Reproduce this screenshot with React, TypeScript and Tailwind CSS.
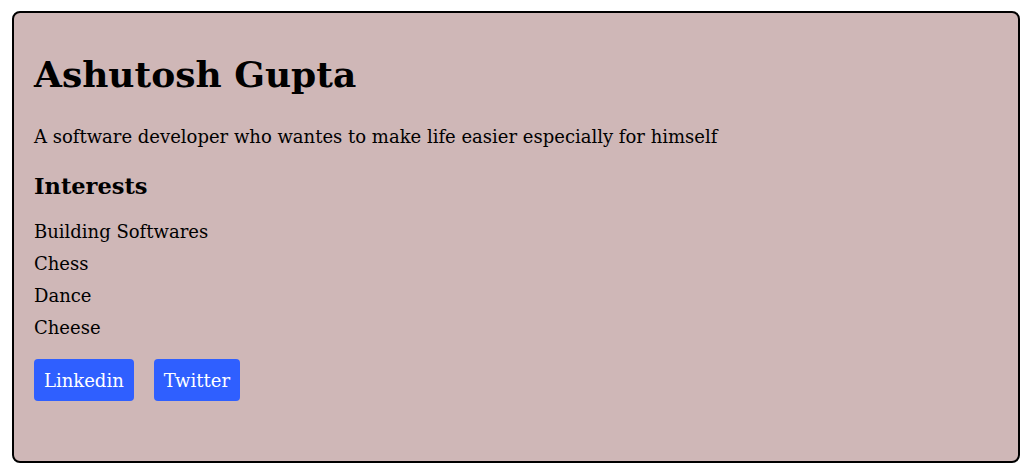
export default function App() {
  const interests = ["Building Softwares", "Chess", "Dance", "Cheese"];
  return (
    <div className="bg-white pt-[11px] pl-3 pr-[11px] pb-[13px]" style={{ fontFamily: '"DejaVu Serif", serif' }}>
      <div className="h-[452px] rounded-lg border-2 border-black bg-[#cfb7b7] px-5 pt-5 text-black">
        <h1 className="mt-5 text-[36px] font-bold leading-[42px]">Ashutosh Gupta</h1>
        <p className="mt-[31px] text-[18px] leading-[21px]">
          A software developer who wantes to make life easier especially for himself
        </p>
        <h2 className="mt-[26px] text-[22.5px] font-bold leading-[26px]">Interests</h2>
        <ul className="mt-[22px] flex flex-col gap-[11px]">
          {interests.map((i) => (
            <li key={i} className="text-[18px] leading-[21px]">{i}</li>
          ))}
        </ul>
        <div className="mt-[21px] flex gap-5">
          <button className="h-[42px] rounded bg-[#2f5fff] px-[10px] text-[18px] text-white">Linkedin</button>
          <button className="h-[42px] rounded bg-[#2f5fff] px-[10px] text-[18px] text-white">Twitter</button>
        </div>
      </div>
    </div>
  );
}
